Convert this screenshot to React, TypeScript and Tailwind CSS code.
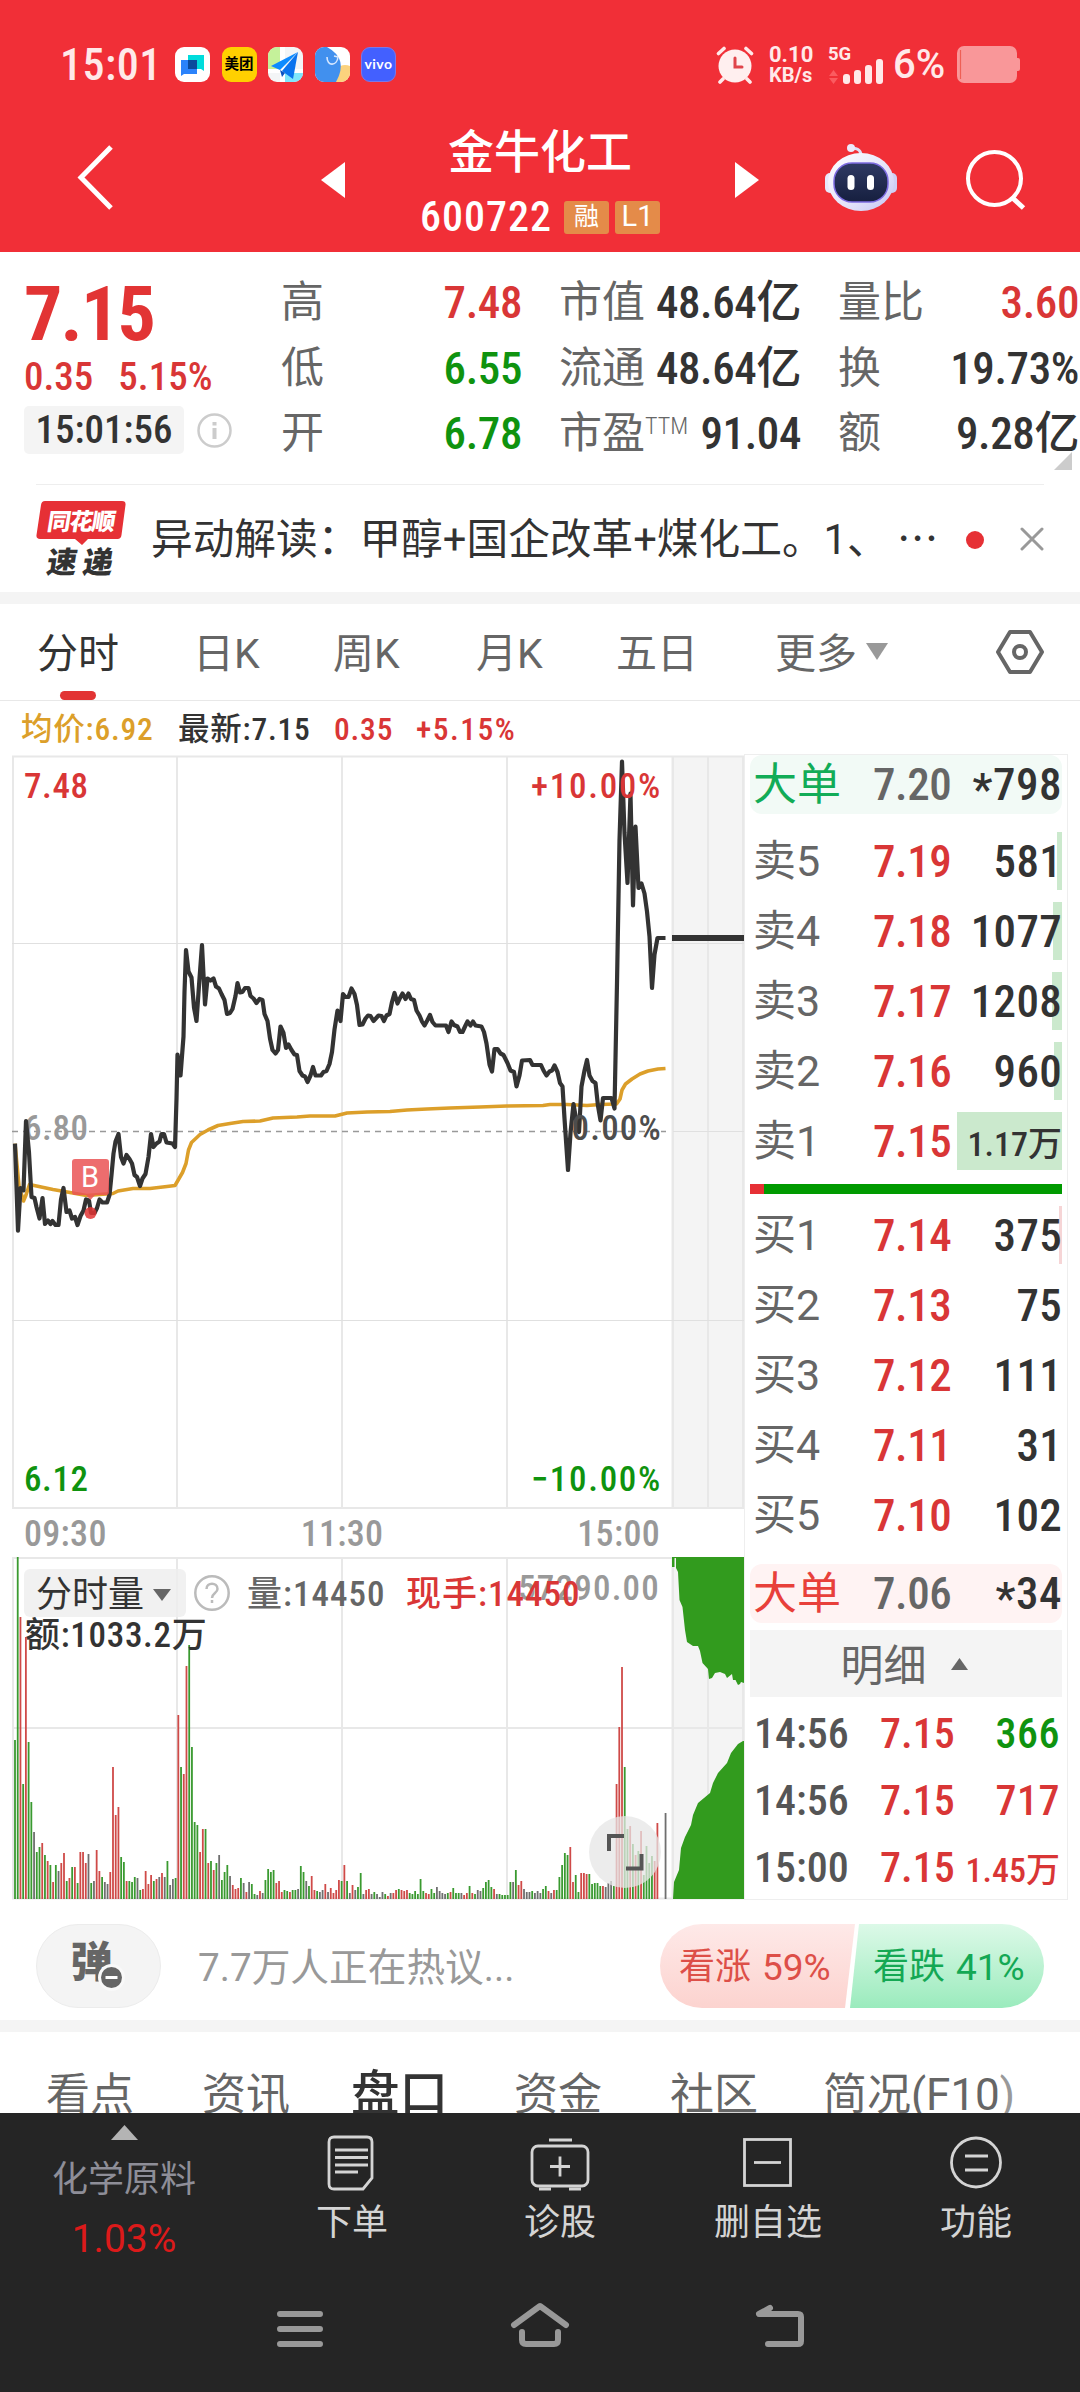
import React from 'react';

const PRICE_LINE =
    '15,1143.6 18,1230.6 20.5,1188 23.5,1190.4 26,1121 29,1152.5 31.5,1197 34.5,1198 36.5,1207 39.5,1218.5 42.5,1198 45,1224 48,1220.5 50.5,1224 52.5,1221 55.5,1225 58.5,1225 61,1199.5 63.5,1188 66.5,1212 69.5,1210.5 72,1218.5 75,1217 77.5,1225 80.5,1216 83.5,1210.5 86,1199.5 89,1200.5 91,1213 94.5,1213 97,1208 99.5,1199.5 102.5,1202.5 107,1202.5 109.5,1195 111.5,1175 113.5,1153.5 115.5,1141.5 118.5,1134 121,1157 123.5,1163.5 126.5,1155 129.5,1159 132,1163.5 134.5,1175 137,1177 140,1186 142.5,1178.5 145.5,1174 148.5,1157 151,1134 153.5,1147 156.5,1143.5 159.5,1141.5 161.5,1134 164,1134 166.5,1142.5 172.5,1143.5 175,1147 176.5,1099 177.5,1054.5 180.5,1075.5 183.5,1036.5 184.5,992 186,950 188.5,971.5 191.5,977.5 194,1007.5 196.5,1021 199.5,978.5 202,945 205,1004.5 207.5,978.5 210.5,980.5 213.5,978.5 216,986.5 219,988.5 221.5,994 224.5,1000 227,1014 230,1013 232.5,1009 235.5,996 237.5,983 240,992.5 242.5,992 245,988 248.5,988 250.5,996 253.5,998.5 256.5,1003 259.5,999 262.5,1000 264.5,1014 267.5,1021 270,1038.5 272.5,1050 275.5,1053.5 278,1050 280.5,1026.5 283.5,1033 286,1048 288.5,1044.5 291.5,1050 294.5,1054.5 297,1055 299.5,1071 302.5,1075.5 305,1076.5 307.5,1082 310.5,1075.5 313,1067 315.5,1075.5 321,1075.5 323.5,1072 326.5,1071 329.5,1064 332,1052 334.5,1029.5 337.5,1010.5 340.5,1021 343,994 345.5,997 348.5,997 351.5,988.5 354.5,994 357,1005 359.5,1025 362.5,1024.5 365.5,1018.5 368,1015.5 370.5,1016 373.5,1021 378.5,1015.5 381.5,1016 384,1021 386.5,1015.5 389.5,1014 392,1002 394.5,993 397.5,1003.5 400,998 402.5,993.5 405.5,999 408.5,993.5 411,999 414,1000 416.5,1010.5 419.5,1015.5 422,1021.5 424.5,1025.5 427.5,1020 430,1015 432.5,1022 435.5,1025.5 446,1025.5 448.5,1032 451.5,1021.5 454,1025 457.5,1026.5 460,1032 462.5,1032 465.5,1025.5 467.5,1021.5 470.5,1025.5 473,1021.5 475.5,1025.5 481.5,1026.5 484,1032 486.5,1043.5 489.5,1064.5 492,1071.5 494.5,1049 497.5,1049 500.5,1053.5 503.5,1055 507.5,1063 510.5,1070.5 514,1072 516.5,1086.5 519.5,1075.5 522,1060.5 530,1060 532.5,1065 541,1065 543.5,1070.5 546.5,1075.5 549.5,1071.5 552,1070.5 554.5,1065.5 557.5,1072 560,1083 562.5,1086.5 564.5,1118.5 568,1170 570.5,1133 573.5,1104 576,1118.5 579,1132 581.5,1086.5 584.5,1070.5 587,1060 589.5,1075.5 592.5,1081 595.5,1083 598,1106 600.5,1120.5 603,1098 611.5,1098 614.5,1108.5 617,983 619.5,840 622,761.5 624.5,833 627.5,883 630.5,793.5 633,905.5 635.5,826.5 638.5,888 641.5,883.5 644.5,893.5 647,911.5 649.5,936.5 652,988 654.5,954.5 657.5,938 665.5,938';

const AVERAGE_LINE =
    '15,1143.6 19,1186 23.5,1201 26,1195 29.5,1184.5 36.5,1186 53,1189.5 70,1192.5 86.5,1195.5 113,1193.5 118,1191 133,1188.5 150,1188.5 167,1186.5 175,1185.5 182.5,1172.5 186,1163.5 188.5,1150 191.5,1142.5 200,1134.5 208,1130 218,1125.5 230,1123.5 243,1121.5 260,1121 273,1118 297,1117 310,1116 335,1116 347,1113 367,1112 390,1111.5 407,1110 427,1109 450,1108 480,1107 507,1106 543,1105.5 550,1104.5 567,1104.5 587,1105.5 600,1104.5 616.5,1104 620,1099 622,1090 625.5,1084 632,1079 640,1074 648,1071 658,1069 665.5,1068.5';

// one entry per minute: bar height + direction (g = down, r = up, k = flat)
const VOLUME =
    '159g 342g 282r 115g 262r 157g 97g 67k 47g 52g 56r 44g 38r 34g 17r 34g 28k 36r 46r 18g 21r 32g 32r 16g 47r 47r 36r 45k 16g 18k 49r 28r 22g 17k 15k 27r 132r 84r 92r 42g 37g 18r 18g 17g 22g 21k 9g 10r 28r 15r 24r 18g 20r 22k 26r 22k 38g 14k 20k 21g 184r 132g 125r 233r 254g 152g 77g 74g 47r 70r 70g 36r 38g 29r 36g 44k 19g 27g 34g 23k 14r 10r 11r 21g 16k 7r 17k 15g 5g 4k 8r 6k 19g 30g 27g 29g 16r 18r 7r 9g 8g 7r 9g 9g 10k 33g 27g 18k 13g 23r 9r 8g 7k 9k 15r 7k 11r 6r 9r 19r 18g 34r 18g 6k 14r 9k 12g 26g 5k 9r 10r 5k 7g 5k 2k 7k 5g 3r 6k 6r 9r 10g 9r 8r 9r 6g 5g 8g 5g 20g 8g 6r 5r 10g 6g 12k 8k 6k 5k 6g 7r 11g 6g 6g 6k 4r 6r 13g 6r 5g 9k 8k 11g 17g 19g 12g 10r 5k 5g 4g 4g 4g 17g 17k 29g 14r 18r 10k 7k 7k 8g 6k 8k 6k 10g 13g 8r 6k 9r 9g 22g 34g 46g 44g 52r 17r 24g 7g 26r 26r 25r 25g 15g 16g 16g 13g 13r 12k 16k 18k 13g 115r 172r 232r 132g 70g 73r 55g 44r 48g 68r 24g 53g 36g 43g 38r 76r 0k 0k 86k';

const BAR_COLORS: Record<string, string> = { g: '#3a9a30', r: '#cf4a48', k: '#6f6f6f' };

const bars = VOLUME.split(' ').map((v, i) => ({
    x: 15 + i * 2.722,
    h: parseInt(v),
    color: BAR_COLORS[v.slice(-1)],
}));

const quoteColumns = [
    {
        className: 'ml-[281px] w-[241px]',
        rows: [
            { label: '高', value: '7.48', color: 'text-[#d93636]' },
            { label: '低', value: '6.55', color: 'text-[#0f930f]' },
            { label: '开', value: '6.78', color: 'text-[#0f930f]' },
        ],
    },
    {
        className: 'ml-[37px] w-[242px]',
        rows: [
            { label: '市值', value: '48.64亿', color: 'text-[#333]' },
            { label: '流通', value: '48.64亿', color: 'text-[#333]' },
            { label: '市盈', sup: 'TTM', value: '91.04', color: 'text-[#333]' },
        ],
    },
    {
        className: 'ml-[37px] w-[241px]',
        rows: [
            { label: '量比', value: '3.60', color: 'text-[#d93636]' },
            { label: '换', value: '19.73%', color: 'text-[#333]' },
            { label: '额', value: '9.28亿', color: 'text-[#333]' },
        ],
    },
];

const sells = [
    { label: '卖5', price: '7.19', vol: '581', depth: 5 },
    { label: '卖4', price: '7.18', vol: '1077', depth: 9 },
    { label: '卖3', price: '7.17', vol: '1208', depth: 10 },
    { label: '卖2', price: '7.16', vol: '960', depth: 8 },
    { label: '卖1', price: '7.15', vol: '1.17万', depth: 105 },
];

const buys = [
    { label: '买1', price: '7.14', vol: '375', depth: 3 },
    { label: '买2', price: '7.13', vol: '75', depth: 0 },
    { label: '买3', price: '7.12', vol: '111', depth: 0 },
    { label: '买4', price: '7.11', vol: '31', depth: 0 },
    { label: '买5', price: '7.10', vol: '102', depth: 0 },
];

const ticks = [
    { time: '14:56', price: '7.15', vol: '366', color: 'text-[#0f930f]' },
    { time: '14:56', price: '7.15', vol: '717', color: 'text-[#d93636]' },
    { time: '15:00', price: '7.15', vol: '1.45万', color: 'text-[#d93636]' },
];

const NUM = 'font-medium [font-stretch:75%]';

const StatusBar = () => (
    <div className="flex h-[115px] items-center pt-[14px] pl-[60px] text-[#ffe9e9]">
        <span className={`${NUM} w-[115px] text-[44px] leading-none tracking-[0.5px]`}>15:01</span>
        <div className="flex gap-[11.5px]">
            <svg width="35" height="35" viewBox="0 0 35 35">
                <rect width="35" height="35" rx="9" fill="#fff" />
                <path d="M13 8h16v16l-3-2H13z" fill="#00dcdc" />
                <path d="M6 13h16v14H9l-3 2z" fill="#2b83fb" />
                <rect x="13" y="13" width="9" height="9" fill="#0b4a9c" />
            </svg>
            <div className="flex size-[35px] items-center justify-center rounded-[9px] bg-[#ffd000] text-[14.5px] font-bold text-black">美团</div>
            <svg width="35" height="35" viewBox="0 0 35 35">
                <defs>
                    <clipPath id="mapClip"><rect width="35" height="35" rx="9" /></clipPath>
                </defs>
                <g clipPath="url(#mapClip)">
                    <rect width="35" height="35" fill="#f3f5f6" />
                    <path d="M0 0h12v22H0z" fill="#c5f19a" />
                    <path d="M17 26h18v9H17z" fill="#7fe6fb" />
                    <path d="M12 0h5v35h-5zM0 22h35v4H0z" fill="#fff" />
                    <path d="M30 5 3 19l9 4z" fill="#0d8bff" />
                    <path d="M30 5 14 24l11 8z" fill="#0b74ee" />
                    <path d="M12 23l2 7 3-4z" fill="#0a50c0" />
                </g>
            </svg>
            <svg width="35" height="35" viewBox="0 0 35 35">
                <defs>
                    <clipPath id="elClip"><rect width="35" height="35" rx="9" /></clipPath>
                </defs>
                <g clipPath="url(#elClip)">
                    <rect width="35" height="35" fill="#fff" />
                    <circle cx="30" cy="30" r="12" fill="#fbd27d" />
                    <path d="M0 0h12q22 12 9 35H0z" fill="#4190ee" />
                </g>
                <path d="M12 10c0 10 10 9 11 0M19 9l4 1" fill="none" stroke="#d6e7ff" strokeWidth="1.6" />
            </svg>
            <div className="flex size-[35px] items-center justify-center rounded-[9px] border border-[#7a78e8] bg-[#4360ff] pb-[2px] font-[Lato] text-[14px] font-bold tracking-[0.5px] text-white">vivo</div>
        </div>
        <svg className="ml-[320px] shrink-0" width="38" height="38" viewBox="0 0 38 38" fill="none" stroke="#ffe9e9" strokeLinecap="round">
            <circle cx="19" cy="20" r="16.500" fill="#ffefef" stroke="none" />
            <path d="M2.500 7.500 8 2.500M30 2.500l5.500 5M7 33l-3 3M31 33l3 3" strokeWidth="3.600" />
            <path d="M19 12v9h7" stroke="#e0444a" strokeWidth="3" />
        </svg>
        <div className="ml-[15px] flex w-[59px] flex-col text-[22px] leading-[20px] font-bold">
            <span>0.10</span>
            <span className="text-[20px]">KB/s</span>
        </div>
        <svg width="56" height="38" viewBox="0 0 56 38" className="shrink-0 overflow-visible">
            <text x="0" y="14" fontSize="18.500" fontWeight="700" fill="#ffe9e9">5G</text>
            <path d="M1 30l4.500-6 4.500 6zM1 32l4.500 6 4.500-6z" fill="#fb5b60" />
            <rect x="15" y="28" width="7" height="10" rx="3" fill="#ffe9e9" />
            <rect x="26" y="24" width="7" height="14" rx="3" fill="#ffe9e9" />
            <rect x="37" y="19" width="7" height="19" rx="3" fill="#ffe9e9" />
            <rect x="48" y="13" width="7" height="25" rx="3" fill="#ffe9e9" />
        </svg>
        <span className="ml-[9px] w-[64px] text-[40px] leading-none font-medium">6%</span>
        <svg width="64" height="37" viewBox="0 0 64 37" className="shrink-0">
            <rect width="60" height="37" rx="7" fill="#f99799" />
            <rect x="57" y="12" width="6" height="13" rx="2" fill="#f99799" />
            <path d="M3.500 4v29" stroke="#ee5f55" strokeWidth="1.200" />
        </svg>
    </div>
);

const TitleBar = () => (
    <div className="flex h-[137px] items-start pl-[77px]">
        <svg className="mt-[30px]" width="36" height="65" viewBox="0 0 36 65" fill="none" stroke="#fff" strokeWidth="5">
            <path d="M34 2 4 32.500 34 63" />
        </svg>
        <svg className="mt-[47px] ml-[208px]" width="24" height="36" viewBox="0 0 24 36"><path d="M24 0v36L0 18z" fill="#fff" /></svg>
        <div className="flex w-[390px] flex-col items-center pt-[8px] text-white">
            <span className="text-[46px] leading-[58px] font-medium">金牛化工</span>
            <div className="mt-[10px] flex items-center gap-[6px]">
                <span className={`${NUM} mr-[6px] text-[42px] leading-[52px] tracking-[1px]`}>600722</span>
                <span className="flex h-[33px] w-[45px] items-center justify-center rounded-[3px] bg-[#e48b49] text-[25px]">融</span>
                <span className="flex h-[33px] w-[45px] items-center justify-center rounded-[3px] bg-[#e48b49] text-[29px]">L1</span>
            </div>
        </div>
        <svg className="mt-[47px]" width="24" height="36" viewBox="0 0 24 36"><path d="M0 0v36l24-18z" fill="#fff" /></svg>
        <svg className="mt-[28px] ml-[66px]" width="72" height="68" viewBox="0 0 72 68">
            <defs>
                <linearGradient id="shell" x1="0" y1="0" x2="1" y2="1">
                    <stop offset="0" stopColor="#fff" />
                    <stop offset="0.6" stopColor="#e4e3fa" />
                    <stop offset="1" stopColor="#c3c4f2" />
                </linearGradient>
                <linearGradient id="visor" x1="0" y1="0" x2="0" y2="1">
                    <stop offset="0" stopColor="#2f3a63" />
                    <stop offset="1" stopColor="#161f3f" />
                </linearGradient>
            </defs>
            <path d="M26 5q11 0 10 9" fill="none" stroke="#dfe0f8" strokeWidth="3" />
            <circle cx="26" cy="5" r="4" fill="#eceafc" />
            <rect x="0" y="30" width="10" height="20" rx="5" fill="#e8e8fb" />
            <rect x="62" y="30" width="10" height="20" rx="5" fill="#cfd0f5" />
            <ellipse cx="36" cy="39" rx="33" ry="29" fill="url(#shell)" />
            <rect x="9" y="20" width="54" height="39" rx="18" fill="url(#visor)" stroke="#7c6be0" strokeWidth="1.500" />
            <rect x="22.500" y="32" width="7" height="15" rx="3.500" fill="#fff" />
            <rect x="42" y="32" width="7" height="15" rx="3.500" fill="#fff" />
        </svg>
        <svg className="mt-[35px] ml-[69px]" width="60" height="60" viewBox="0 0 60 60" fill="none" stroke="#fff" strokeWidth="4">
            <circle cx="28.500" cy="28.500" r="26.500" />
            <path d="M46 47.500 57.500 58" strokeWidth="5" />
        </svg>
    </div>
);

const Quote = () => (
    <div className="relative h-[232px]">
        <div className="flex pt-[18px]">
            {quoteColumns.map((col, idx) => (
                <div key={idx} className={`${col.className} shrink-0`}>
                    {col.rows.map((row) => (
                        <div key={row.label} className="flex h-[65.5px] items-center justify-between whitespace-nowrap">
                            <span className="flex items-start text-[43px] leading-none text-[#666]">
                                {row.label}
                                {row.sup && <span className="pt-[2px] text-[24px] leading-none font-light [font-stretch:75%]">{row.sup}</span>}
                            </span>
                            <span className={`${NUM} text-[45px] leading-none tracking-[-0.4px] ${row.color}`}>{row.value}</span>
                        </div>
                    ))}
                </div>
            ))}
        </div>
        <div className="absolute top-0 left-[24px] flex w-[240px] flex-col text-[#d93636]">
            <span className="mt-[24px] text-[76px] leading-[76px] font-bold tracking-[-1.8px] text-[#e23434] [font-stretch:75%]">7.15</span>
            <div className={`${NUM} mt-[5px] flex gap-[25px] text-[39px] leading-[40px]`}>
                <span>0.35</span>
                <span>5.15%</span>
            </div>
            <div className="mt-[9px] flex items-center gap-[13px]">
                <span className={`${NUM} flex h-[48px] w-[160px] items-center justify-center rounded-[5px] bg-[#f4f4f4] text-[39px] text-[#333]`}>15:01:56</span>
                <svg width="35" height="35" viewBox="0 0 35 35" fill="none" stroke="#ccc">
                    <circle cx="17.500" cy="17.500" r="16" strokeWidth="2.500" />
                    <path d="M17.500 9v3.500M17.500 15v11" strokeWidth="4" />
                </svg>
            </div>
        </div>
        <svg className="absolute top-[200px] left-[1054px]" width="18" height="18" viewBox="0 0 18 18"><path d="M18 0v18H0z" fill="#ccc" /></svg>
    </div>
);

const News = () => (
    <div className="flex h-[108px] items-center">
        <svg className="mt-[-2px] ml-[36px] shrink-0" width="90" height="76" viewBox="0 0 90 76">
            <path d="M9 1h77q4 0 3.500 4l-4 30q-.5 4-4 4H52l-6 6-7-6H4q-4 0-3.500-4L5 5q.5-4 4-4z" fill="#e63035" />
            <text transform="skewX(-9)" x="15" y="30" fontSize="23.500" fontWeight="900" fill="#fff" textLength="68">同花顺</text>
            <text transform="skewX(-9)" x="21" y="73" fontSize="30" fontWeight="900" fill="#333" textLength="66">速递</text>
        </svg>
        <div className="ml-[25px] flex w-[786px] gap-[8px] pt-[2px] text-[41.7px] leading-[60px] whitespace-nowrap text-[#333]">
            <span>异动解读：甲醇+国企改革+煤化工。1、</span>
            <span>⋯</span>
        </div>
        <span className="mt-[1px] ml-[29px] size-[18px] shrink-0 rounded-full bg-[#e63035]" />
        <svg className="ml-[36px] shrink-0" width="24" height="24" viewBox="0 0 24 24" stroke="#999" strokeWidth="3" strokeLinecap="round">
            <path d="M2 2l20 20M22 2 2 22" />
        </svg>
    </div>
);

const PeriodTabs = () => (
    <div className="relative flex h-[97px] shrink-0 items-center border-b border-[#e8e8e8] pt-[4px] text-[41px] leading-none whitespace-nowrap text-[#666]">
        <span className="ml-[37px] w-[156px] text-[#333]">分时</span>
        <span className="w-[140px]">日K</span>
        <span className="w-[143px]">周K</span>
        <span className="w-[140px]">月K</span>
        <span className="w-[159px]">五日</span>
        <span>更多</span>
        <svg className="mt-[-5px] ml-[9px]" width="22" height="17" viewBox="0 0 22 17"><path d="M0 0h22L11 17z" fill="#999" /></svg>
        <svg className="mt-[-4px] ml-[107px]" width="50" height="46" viewBox="0 0 50 46" fill="none" stroke="#666" strokeWidth="4" strokeLinejoin="round">
            <path d="M15 3h20l12 20-12 20H15L3 23z" />
            <circle cx="25" cy="23" r="6" />
        </svg>
        <span className="absolute bottom-0 left-[60px] h-[9px] w-[36px] rounded-full bg-[#e23434]" />
    </div>
);

const PriceChart = () => (
    <div className={`${NUM} relative h-[755px] text-[35px] leading-none tracking-[0.6px]`}>
        <svg className="block" width="744" height="755" viewBox="0 754 744 755" fill="none">
            <path d="M671 756h73v752h-73z" fill="#f4f4f4" />
            <path d="M12 756.500h732M12 1508h732M13 756v752M177 756v752M342 756v752M507 756v752M673 756v752M708 756v752M743 756v752" stroke="#e8e8e8" strokeWidth="2" />
            <path d="M12 943.500h732M12 1320.500h732M673 1131.500h71" stroke="#e0e0e0" />
            <path d="M12 1131.500h654" stroke="#999" strokeWidth="1.500" strokeDasharray="6 5" />
            <polyline points={AVERAGE_LINE} stroke="#dc9f2a" strokeWidth="3.600" strokeLinejoin="round" />
        </svg>
        <span className="absolute top-[15px] left-[24px] text-[#d93636]">7.48</span>
        <span className="absolute top-[357px] left-[24px] text-[#999]">6.80</span>
        <span className="absolute top-[708px] left-[24px] text-[#0f930f]">6.12</span>
        <svg className="absolute top-0 left-0" width="744" height="755" viewBox="0 754 744 755" fill="none">
            <polyline points={PRICE_LINE} stroke="#333" strokeWidth="4.200" strokeLinejoin="round" />
            <path d="M672 938h72" stroke="#333" strokeWidth="6" />
            <path d="M75 1159h31q3 0 3 3v30q0 3-3 3H95l-4.500 5-4.500-5H75q-3 0-3-3v-30q0-3 3-3z" fill="#ea5455" fillOpacity="0.850" />
            <circle cx="90.500" cy="1213" r="6" fill="#e23434" fillOpacity="0.850" />
        </svg>
        <span className="absolute top-[409px] left-[81px] text-[29px] font-normal tracking-normal text-white [font-stretch:100%]">B</span>
        <span className="absolute top-[15px] right-[82px] tracking-[1.7px] text-[#d93636]">+10.00%</span>
        <span className="absolute top-[357px] right-[82px] tracking-[1.2px] text-[#4d4d4d]">0.00%</span>
        <span className="absolute top-[708px] right-[82px] tracking-[1.7px] text-[#0f930f]">−10.00%</span>
    </div>
);

const VolumeChart = () => (
    <div className={`${NUM} relative h-[344px] text-[35px] leading-none tracking-[0.7px] whitespace-nowrap`}>
        <svg className="block" width="744" height="344" viewBox="0 1556 744 344" fill="none">
            <path d="M671 1557h73v342h-73z" fill="#f4f4f4" />
            <path d="M12 1558h732M12 1728h732M13 1557v342M177 1557v342M342 1557v342M507 1557v342M673 1557v342M708 1557v342M743 1557v342M12 1898.500h732" stroke="#e8e8e8" strokeWidth="2" />
            {bars.map((b, i) => (
                <path key={i} d={`M${b.x} 1899v-${b.h}`} stroke={b.color} strokeWidth="1.800" />
            ))}
            <path d="M672 1557H744V1683L741 1682 740 1684 738 1685 735.500 1680H733L732 1674 727 1678 725 1674 720 1672 715 1673 712 1678 709 1679 708 1669 702.500 1663 700 1651 698 1646H693L687 1642 685 1630 682.500 1607 679.500 1600 678 1572 676 1568V1558H674.500V1567H672Z" fill="#329b1e" />
            <path d="M673 1899L674 1882 679 1870 681 1848 685 1837 691 1825 693 1815 698 1803 710 1793 713 1783 718 1773 727 1763 731 1753 738 1744 743 1741H744V1899Z" fill="#329b1e" />
        </svg>
        <span className="absolute top-[15px] right-[84px] tracking-[1.2px] text-[#999]">57290.00</span>
        <div className="absolute top-[13px] left-[24px] flex h-[48px] items-center">
            <span className="flex h-full w-[162px] items-center gap-[9px] rounded-[6px] bg-[#eee]/80 pt-[3px] pl-[12px] text-[36px] font-normal tracking-normal text-[#333]">
                分时量
                <svg width="18" height="12" viewBox="0 0 18 12"><path d="M0 0h18L9 12z" fill="#666" /></svg>
            </span>
            <svg className="ml-[8px]" width="36" height="36" viewBox="0 0 36 36" fill="none" stroke="#bbb" strokeWidth="2.500">
                <circle cx="18" cy="18" r="16.700" />
                <path d="M12.500 14c0-7 11-7 11 0 0 4-5.500 4-5.500 9M18 25v3" />
            </svg>
            <span className="ml-[17px] pt-[2px] tracking-[1px] text-[#666]">量:14450</span>
            <span className="absolute top-[8px] left-[382px] tracking-[1px] text-[#d93636]">现手:14450</span>
        </div>
        <span className="absolute top-[62px] left-[25px] text-[#333]">额:1033.2万</span>
        <svg className="absolute top-[260px] left-[589px]" width="72" height="72" viewBox="0 0 72 72" fill="none" stroke="#555" strokeWidth="4">
            <circle cx="36" cy="36" r="36" fill="#e6e6e6" fillOpacity="0.750" stroke="none" />
            <path d="M20 35V20h15M37 52.500h15.500V38" />
        </svg>
    </div>
);

const BigOrder = ({ price, vol, className, labelColor }: { price: string; vol: string; className: string; labelColor: string }) => (
    <div className={`flex h-[59px] items-center rounded-[12px] pl-[3px] ${className}`}>
        <span className={`w-[120px] text-[44px] leading-none ${labelColor}`}>大单</span>
        <span className={`${NUM} text-[45px] leading-none tracking-[-0.4px] text-[#666]`}>{price}</span>
        <span className={`${NUM} flex-1 text-right text-[45px] leading-none tracking-[0.5px] text-[#333]`}>
            <span className="relative top-[5px]">*</span>{vol}
        </span>
    </div>
);

const Level = ({ row, tint }: { row: (typeof sells)[0]; tint: string }) => (
    <div className="relative flex h-[58px] items-center pl-[3px] whitespace-nowrap">
        <span className={`absolute top-0 right-0 h-full ${tint}`} style={{ width: row.depth }} />
        <span className="relative w-[120px] text-[43px] leading-none text-[#666]">{row.label}</span>
        <span className={`${NUM} relative text-[45px] leading-none tracking-[-0.4px] text-[#d93636]`}>{row.price}</span>
        <span className={`${NUM} relative flex-1 text-right leading-none text-[#333] ${row.vol.includes('万') ? 'pt-[5px] text-[34px]' : 'text-[45px] tracking-[0.3px]'}`}>{row.vol}</span>
    </div>
);

const OrderBook = () => (
    <div className="h-[1146px] w-[324px] border border-[#eee] px-[5px]">
        <BigOrder price="7.20" vol="798" className="bg-[#f2faf6]" labelColor="text-[#12ac57]" />
        <div className="mt-[18px] flex flex-col gap-[12px]">
            {sells.map((row) => <Level key={row.label} row={row} tint="bg-[#cbe9cd]" />)}
        </div>
        <div className="mt-[14px] flex h-[10px] bg-[#009a00]">
            <div className="w-[14px] bg-[#e63035]" />
        </div>
        <div className="mt-[12px] flex flex-col gap-[12px]">
            {buys.map((row) => <Level key={row.label} row={row} tint="bg-[#f6d5d6]" />)}
        </div>
        <BigOrder price="7.06" vol="34" className="mt-[20px] bg-[#fff3f3]" labelColor="text-[#e8403a]" />
        <div className="mt-[7px] flex h-[67px] items-center justify-center gap-[24px] bg-[#f4f4f4] pt-[5px] pr-[4px] text-[43px] leading-none text-[#666]">
            明细
            <svg className="mt-[-5px]" width="17" height="12" viewBox="0 0 17 12"><path d="M0 12h17L8.500 0z" fill="#666" /></svg>
        </div>
        <div className="pt-[3px]">
            {ticks.map((t, idx) => (
                <div key={idx} className={`${NUM} flex h-[67px] items-center pr-[2px] pl-[4px] text-[42px] leading-none whitespace-nowrap`}>
                    <span className="w-[126px] text-[#555]">{t.time}</span>
                    <span className="text-[#d93636]">{t.price}</span>
                    <span className={`flex-1 text-right ${t.color} ${t.vol.includes('万') ? 'pt-[4px] text-[34px]' : 'tracking-[0.5px]'}`}>{t.vol}</span>
                </div>
            ))}
        </div>
    </div>
);

const Discussion = () => (
    <div className="flex h-[120px] shrink-0 items-center pt-[24px] pb-[12px]">
        <div className="relative ml-[36px] flex h-[84px] w-[125px] shrink-0 items-center justify-center rounded-full border border-[#ececec] bg-[#f4f4f4] pr-[14px] pb-[6px] text-[42px] leading-none font-black text-[#666]">
            弹
            <svg className="absolute top-[39px] left-[61px]" width="27" height="27" viewBox="0 0 27 27">
                <circle cx="13.500" cy="13.500" r="13.500" fill="#f9f9f9" />
                <circle cx="13.500" cy="13.500" r="10.500" fill="#666" />
                <path d="M7.500 13.500h12" stroke="#fff" strokeWidth="3" />
            </svg>
        </div>
        <span className="ml-[37px] w-[462px] pt-[4px] text-[38.700px] leading-none whitespace-nowrap text-[#999]">7.7万人正在热议...</span>
        <div className="flex h-[84px] w-[384px] overflow-hidden rounded-full text-[36px] leading-none whitespace-nowrap">
            <div className="flex h-full w-[195px] shrink-0 items-center gap-[11px] bg-linear-to-b from-[#fee9e8] to-[#fcd3cf] pt-[2px] pl-[19px] text-[#dd4f48] [clip-path:polygon(0_0,100%_0,185px_100%,0_100%)]">
                <span>看涨</span><span className="text-[37px]">59%</span>
            </div>
            <div className="ml-[-5px] flex h-full w-[194px] shrink-0 items-center gap-[11px] bg-linear-to-b from-[#dcf9e8] to-[#9aebbd] pt-[2px] pl-[23px] text-[#14a854] [clip-path:polygon(9px_0,100%_0,100%_100%,0_100%)]">
                <span>看跌</span><span className="text-[37px]">41%</span>
            </div>
        </div>
    </div>
);

const InfoTabs = () => (
    <div className="h-[81px] shrink-0 overflow-hidden">
        <div className="flex items-center pt-[36px] text-[44px] leading-[54px] whitespace-nowrap text-[#666]">
            <span className="ml-[46px] w-[156px]">看点</span>
            <span className="w-[149px]">资讯</span>
            <span className="w-[163px] text-[48.500px] font-medium text-[#333]">盘口</span>
            <span className="w-[156px]">资金</span>
            <span className="w-[153px]">社区</span>
            <span>简况(F10<span className="text-[#999]">)</span></span>
        </div>
    </div>
);

const actions = [
    {
        label: '下单',
        icon: <><path d="M8 3h33q5 0 5 5v36L37 55H8q-5 0-5-5V8q0-5 5-5z" /><path d="M9 16h33M9 23.500h33M9 31h33M9 38h23" /></>,
    },
    {
        label: '诊股',
        icon: <><rect x="-2" y="12" width="56" height="40" rx="6" /><path d="M15 6h23M26 22.500v20M16 32.500h20M5 55h12M35 55h12" /></>,
    },
    {
        label: '删自选',
        icon: <><rect x="2.500" y="5.500" width="46" height="46" /><path d="M12 28.500h27" /></>,
    },
    {
        label: '功能',
        icon: <><circle cx="26" cy="28.500" r="24.500" /><path d="M15 22h23M15 36h23" /></>,
    },
];

const BottomBar = () => (
    <div className="h-[279px] shrink-0 bg-[#252525]">
        <div className="flex h-[160px]">
            <div className="flex w-[248px] flex-col items-center text-[36px] leading-none">
                <svg className="mt-[12px]" width="27" height="15" viewBox="0 0 27 15"><path d="M0 15h27L13.500 0z" fill="#b4b4b4" /></svg>
                <span className="mt-[22px] text-[#8e8e98]">化学原料</span>
                <span className="mt-[22px] text-[39px] text-[#dc1a1a]">1.03%</span>
            </div>
            {actions.map((a) => (
                <div key={a.label} className="flex w-[208px] flex-col items-center text-[36px] leading-none text-[#d4d4d4]">
                    <svg className="mt-[21px] overflow-visible" width="52" height="58" viewBox="0 0 52 58" fill="none" stroke="#d4d4d4" strokeWidth="2.800">{a.icon}</svg>
                    <span className="mt-[13px]">{a.label}</span>
                </div>
            ))}
        </div>
        <svg className="mt-[36px] ml-[270px] overflow-visible" width="540" height="44" viewBox="0 0 540 44" fill="none" stroke="#999" strokeWidth="6" strokeLinecap="round" strokeLinejoin="round">
            <path d="M10 5h40M10 20h40M10 35h40" />
            <path d="M244 16 270 -3l26 19M252 23v8q0 4 4 4h28q4 0 4-4v-8" />
            <path d="M500 -1 489 5h39q3 0 3 3v24q0 3-3 3h-30" />
        </svg>
    </div>
);

const App = () => {
    return (
        <div className="flex h-[2392px] w-[1080px] flex-col overflow-hidden bg-white font-[Roboto,'Noto_Sans_CJK_SC',sans-serif]">
            <header className="h-[252px] shrink-0 bg-[#f12f37]">
                <StatusBar />
                <TitleBar />
            </header>
            <Quote />
            <div className="mr-[36px] ml-[36px] h-px shrink-0 bg-[#eee]" />
            <News />
            <div className="mt-[-1px] h-[12px] shrink-0 bg-[#f4f4f4]" />
            <PeriodTabs />
            <div className={`${NUM} flex h-[53px] shrink-0 items-center pt-[4px] pl-[21px] text-[31.500px] leading-none tracking-[0.8px] whitespace-nowrap text-[#d93636]`}>
                <span className="w-[157px] text-[#dc9f2a]">均价:6.92</span>
                <span className="w-[156px] text-[#333]">最新:7.15</span>
                <span className="w-[82px]">0.35</span>
                <span className="tracking-[1.500px]">+5.15%</span>
            </div>
            <main className="flex h-[1146px] shrink-0">
                <div className="w-[744px]">
                    <PriceChart />
                    <div className={`${NUM} flex h-[47px] items-center justify-between pt-[3px] pr-[84px] pl-[24px] text-[36px] leading-none tracking-[0.3px] text-[#999]`}>
                        <span>09:30</span>
                        <span>11:30</span>
                        <span>15:00</span>
                    </div>
                    <VolumeChart />
                </div>
                <OrderBook />
            </main>
            <Discussion />
            <div className="h-[12px] shrink-0 bg-[#f4f4f4]" />
            <InfoTabs />
            <BottomBar />
        </div>
    );
};

export default App;
